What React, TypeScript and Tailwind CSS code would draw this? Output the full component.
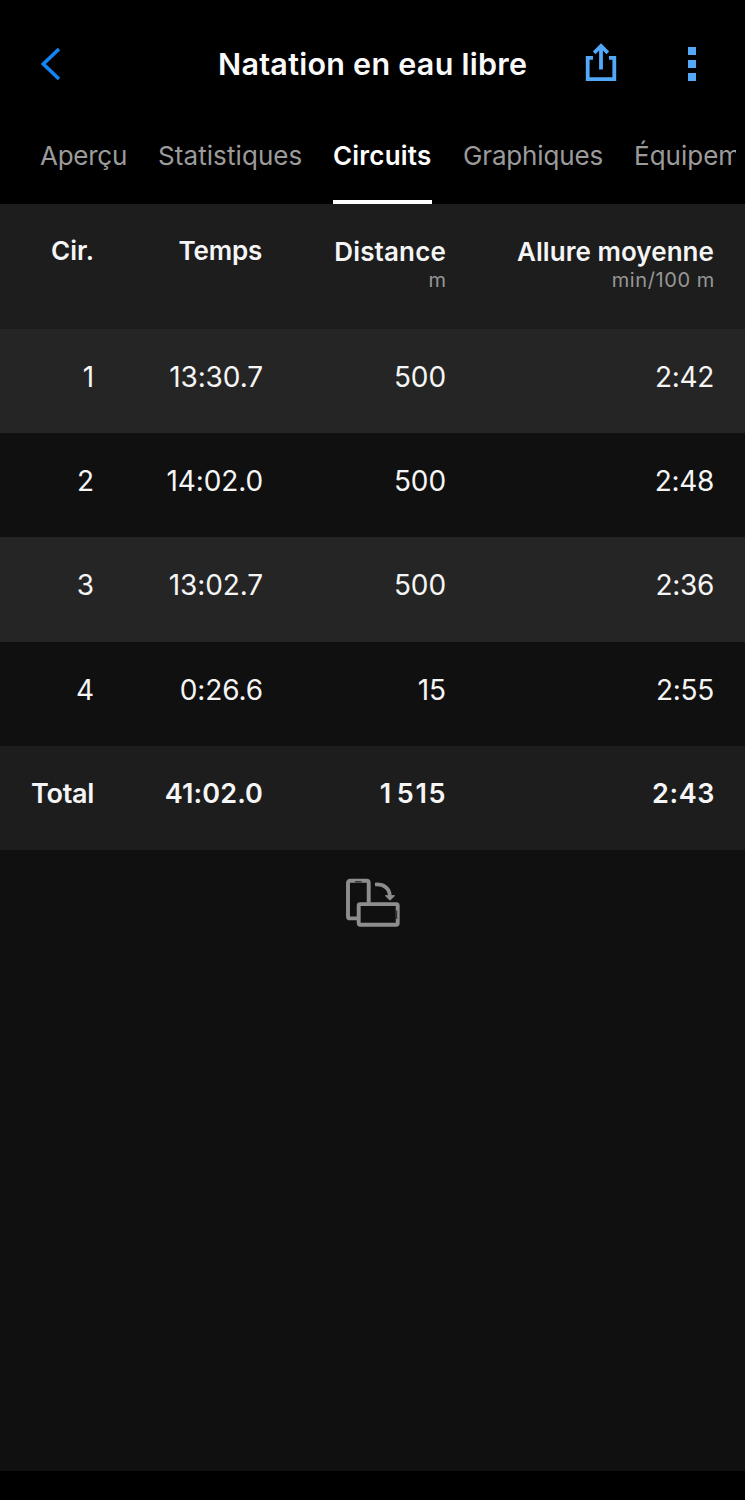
import React from "react";

type Lap = { lap: string; time: string; distance: string; pace: string; row: string };

const laps: Lap[] = [
  { lap: "1", time: "13:30.7", distance: "500", pace: "2:42", row: "h-[104px] bg-[#252525]" },
  { lap: "2", time: "14:02.0", distance: "500", pace: "2:48", row: "h-[104px] bg-[#101010]" },
  { lap: "3", time: "13:02.7", distance: "500", pace: "2:36", row: "h-[105px] bg-[#252525]" },
  { lap: "4", time: "0:26.6", distance: "15", pace: "2:55", row: "h-[104px] bg-[#101010]" },
];

const columns = "grid grid-cols-[94px_168px_183px_269px] text-right whitespace-nowrap";

function Header() {
  return (
    <header className="flex h-[128px] items-center">
      <button className="ml-[39px] w-[24px]" aria-label="Retour">
        <svg className="block" width="24" height="36" viewBox="0 0 24 36" fill="none">
          <path d="M20 3 4.3 18 20 33" stroke="#1284f5" strokeWidth="3.6" />
        </svg>
      </button>
      <h1 className="ml-[155px] w-[312px] text-[30.5px] font-semibold leading-9 tracking-[0.26px] whitespace-nowrap text-[#fafafa]">
        Natation en eau libre
      </h1>
      <button className="ml-[54px]" aria-label="Partager">
        <svg className="block" width="34" height="42" viewBox="0 0 34 42" fill="none" stroke="#53a8fa" strokeWidth="3.8">
          <path d="M9 14.9H3.7v21.3h26.6V14.9H25" />
          <path d="M17 26.5V4M10.2 9.8l6.8-6.9 6.8 6.9" />
        </svg>
      </button>
      <button className="ml-[70px] flex flex-col gap-[5px]" aria-label="Plus">
        <span className="size-2 bg-[#53a8fa]" />
        <span className="size-2 bg-[#53a8fa]" />
        <span className="size-2 bg-[#53a8fa]" />
      </button>
    </header>
  );
}

function Tabs() {
  return (
    <nav className="flex h-[76px] w-[736px] overflow-hidden pl-[40px] text-[26px] leading-[56px] whitespace-nowrap text-[#9b9b9b]">
      <span className="w-[118px] shrink-0 tracking-[-0.25px]">Aperçu</span>
      <span className="w-[175px] shrink-0 tracking-[0.08px]">Statistiques</span>
      <span className="h-[76px] w-[99px] shrink-0 border-b-4 border-white font-semibold tracking-[0.2px] text-white">Circuits</span>
      <span className="ml-[31px] w-[171px] shrink-0 tracking-[-0.15px]">Graphiques</span>
      <span className="shrink-0">Équipement</span>
    </nav>
  );
}

export default function App() {
  return (
    <div className="flex h-[1500px] w-[745px] flex-col overflow-hidden bg-black font-['Inter',sans-serif] text-[#f5f5f5]">
      <Header />
      <Tabs />
      <main className="h-[1267px] bg-[#101010]">
        <div className={`${columns} h-[125px] bg-[#1d1d1d] pt-[31px] text-[26px] font-semibold leading-8`}>
          <span>Cir.</span>
          <span className="tracking-[-0.2px]">Temps</span>
          <div className="pt-px">
            <div className="-mr-px tracking-[0.15px]">Distance</div>
            <div className="-mr-px text-xl font-normal leading-6 text-[#979797]">m</div>
          </div>
          <div className="pt-px">
            <div className="tracking-[0.05px]">Allure moyenne</div>
            <div className="-mr-px text-xl font-normal leading-6 tracking-[0.6px] text-[#979797]">min/100 m</div>
          </div>
        </div>
        {laps.map((l) => (
          <div key={l.lap} className={`${columns} ${l.row} pt-[30px] text-[28px] leading-9 tracking-[-0.1px]`}>
            <span>{l.lap}</span>
            <span className="-mr-px">{l.time}</span>
            <span className="-mr-px">{l.distance}</span>
            <span className="tracking-[-0.3px]">{l.pace}</span>
          </div>
        ))}
        <div className={`${columns} h-[104px] bg-[#1d1d1d] pt-[30px] text-[27px] font-semibold leading-9`}>
          <span className="tracking-[-0.3px]">Total</span>
          <span className="-mr-px tracking-[0.1px]">41:02.0</span>
          <span className="-mr-[2px] tracking-[1.6px]"><span className="mr-[4px]">1</span>515</span>
          <span className="-mr-px tracking-[0.6px]">2:43</span>
        </div>
        <svg className="ml-[345px] mt-[27px] block" width="56" height="52" viewBox="0 0 56 52" fill="none" stroke="#8e8e8e">
          <path d="M12 41.4H5a2 2 0 0 1-2-2V5.7a2 2 0 0 1 2-2h16.7a2 2 0 0 1 2 2v20" strokeWidth="3.9" />
          <path d="M10 4.7h6.6" stroke="#303030" strokeWidth="1.3" />
          <rect x="13.7" y="27.1" width="39" height="20.6" rx="1.5" strokeWidth="3.9" />
          <path d="M51.6 33.5V42" stroke="#303030" strokeWidth="1.3" />
          <path d="M30 7.5c9-.8 14.8 4.2 14.8 11.5" strokeWidth="3.7" />
          <path d="M40.4 18.7h9.2L45 23.2z" fill="#8e8e8e" strokeWidth="1" />
        </svg>
      </main>
    </div>
  );
}
